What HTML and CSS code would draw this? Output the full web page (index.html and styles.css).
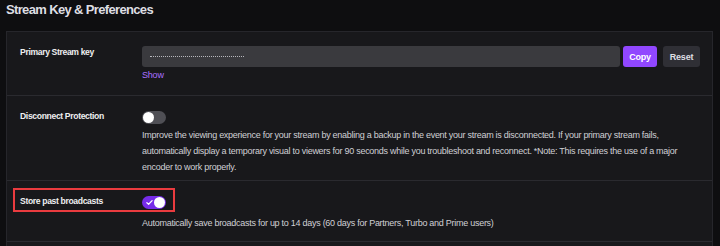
FILE: index.html
```html
<!DOCTYPE html>
<html>
<head>
<meta charset="utf-8">
<link rel="stylesheet" href="styles.css">
</head>
<body>
<div class="page">
  <h1 class="title">Stream Key &amp; Preferences</h1>
  <div class="card">
    <div class="row row-key">
      <div class="label">Primary Stream key</div>
      <div class="content">
        <div class="key-line">
          <div class="key-input"><span class="mask"></span></div>
          <button class="btn btn-primary">Copy</button>
          <button class="btn btn-secondary">Reset</button>
        </div>
        <a class="show-link">Show</a>
      </div>
    </div>
    <div class="row row-disconnect">
      <div class="label">Disconnect Protection</div>
      <div class="content">
        <div class="toggle"><span class="knob"></span></div>
        <p class="desc">Improve the viewing experience for your stream by enabling a backup in the event your stream is disconnected. If your primary stream fails, automatically display a temporary visual to viewers for 90 seconds while you troubleshoot and reconnect. *Note: This requires the use of a major encoder to work properly.</p>
      </div>
    </div>
    <div class="row row-store">
      <div class="highlight"></div>
      <div class="label">Store past broadcasts</div>
      <div class="content">
        <div class="toggle toggle-on">
          <svg class="check" viewBox="0 0 8 8" width="7" height="7"><path d="M1 4.2 L3 6 L7 1.8" fill="none" stroke="#fff" stroke-width="1.4" stroke-linecap="round" stroke-linejoin="round"/></svg>
          <span class="knob"></span>
        </div>
        <p class="desc desc-store">Automatically save broadcasts for up to 14 days (60 days for Partners, Turbo and Prime users)</p>
      </div>
    </div>
    <div class="row row-empty"></div>
  </div>
</div>
</body>
</html>
```
FILE: styles.css
```css
html, body {
  margin: 0;
  padding: 0;
  background: #0e0e10;
  height: 100%;
  overflow: hidden;
}
body {
  font-family: "Liberation Sans", Arial, sans-serif;
  color: #efeff1;
}
.page {
  padding: 0 7px 0 6px;
}
.title {
  margin: 0 0 11px 0;
  font-size: 13px;
  letter-spacing: -0.65px;
  line-height: 20px;
  font-weight: bold;
  color: #dedee3;
}
.card {
  background: #18181b;
  border: 1px solid #26262b;
  border-bottom: none;
  height: 300px;
}
.row {
  position: relative;
  display: flex;
  padding: 13px 12px 0 13px;
  border-bottom: 1px solid #2a2a2f;
}
.label {
  width: 122px;
  flex: none;
  font-size: 8.6px;
  letter-spacing: -0.35px;
  line-height: 12px;
  font-weight: bold;
  color: #efeff1;
  padding-top: 1px;
}
.content {
  flex: 1;
  display: flex;
  flex-direction: column;
  align-items: flex-start;
}
.row-key { height: 50px; }
.row-disconnect { height: 71px; }
.row-store { height: 47px; }
.key-line {
  display: flex;
  align-items: center;
  width: 100%;
  margin-top: 1px;
}
.key-input {
  flex: 1;
  height: 21px;
  background: #3a3a3e;
  border-radius: 3px;
  display: flex;
  align-items: center;
  padding-left: 8px;
}
.mask {
  display: block;
  width: 94px;
  border-top: 1px dotted #b8b8bd;
}
.btn {
  font-family: inherit;
  font-size: 9px;
  letter-spacing: -0.2px;
  font-weight: bold;
  height: 21px;
  border: none;
  border-radius: 3px;
  padding: 0;
  color: #fff;
}
.btn-primary {
  background: #9147ff;
  width: 34px;
  margin-left: 3px;
}
.btn-secondary {
  background: #2f2f35;
  color: #dedee3;
  width: 37px;
  margin-left: 6px;
}
.show-link {
  margin-top: 2px;
  font-size: 9px;
  letter-spacing: -0.2px;
  line-height: 12px;
  color: #a970ff;
}
.toggle {
  position: relative;
  width: 24px;
  height: 13px;
  border-radius: 7px;
  background: #4f4f55;
  margin-top: 2px;
}
.toggle .knob {
  position: absolute;
  top: 1px;
  left: 1px;
  width: 11px;
  height: 11px;
  border-radius: 50%;
  background: #fff;
}
.toggle-on {
  background: #772ce8;
}
.toggle-on .knob {
  left: 12px;
}
.check {
  position: absolute;
  left: 4px;
  top: 3px;
}
.desc {
  margin: 3px 0 0 0;
  font-size: 9px;
  letter-spacing: -0.27px;
  line-height: 16px;
  color: #d0d0d5;
  max-width: 557px;
}
.desc-store {
  margin-top: 6px;
}
.highlight {
  position: absolute;
  left: 6px;
  top: 7px;
  width: 158px;
  height: 20px;
  border: 2px solid #ea3b3f;
}
```
